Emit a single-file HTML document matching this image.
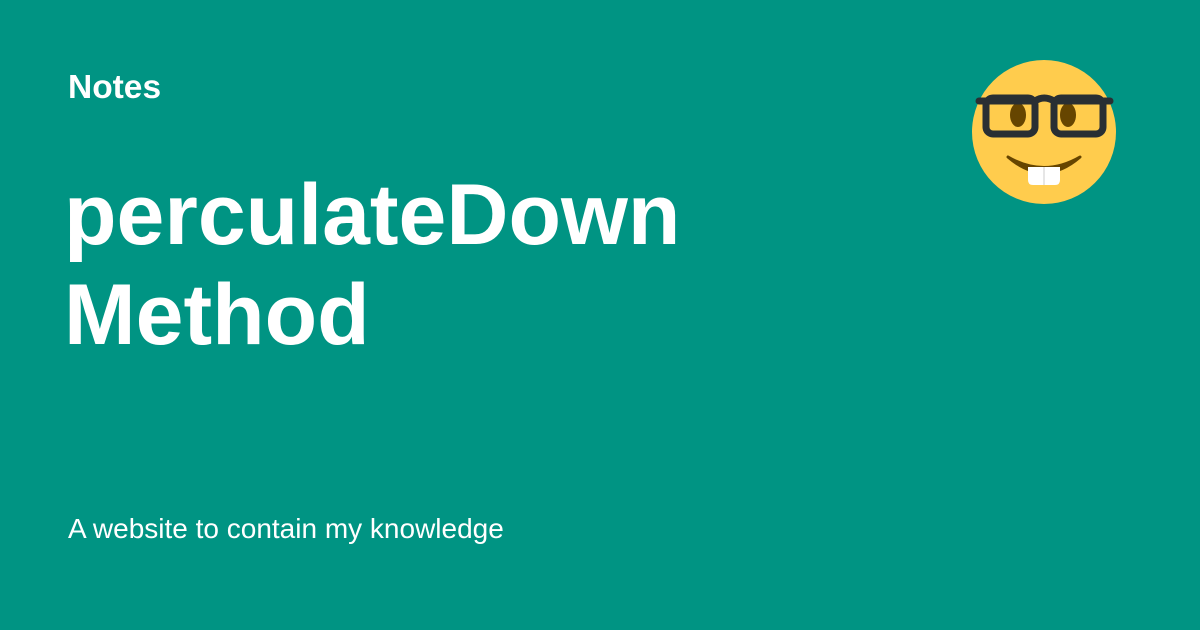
<!DOCTYPE html>
<html><head><style>
html,body{margin:0;padding:0}
body{width:1200px;height:630px;background:#009483;position:relative;overflow:hidden;font-family:"Liberation Sans",sans-serif;color:#fff}
.t{position:absolute;left:68px;white-space:nowrap}
</style></head><body>
<div class="t" style="top:70px;font-size:33.5px;font-weight:bold;line-height:36px">Notes</div>
<div class="t" style="top:165px;font-size:86px;font-weight:bold;line-height:100px;left:64px">perculateDown<br>Method</div>
<div class="t" style="top:511px;font-size:28px;line-height:36px">A website to contain my knowledge</div>
<svg style="position:absolute;left:0;top:0" width="1200" height="630">
<circle cx="1044" cy="132" r="72" fill="#FFCC4D"/>
<path d="M1008 157 Q1044 188 1080 157 Q1044 178 1008 157Z" fill="#664500" stroke="#664500" stroke-width="3" stroke-linejoin="round"/>
<path d="M1028 167 L1060 167 L1060 180 Q1060 185 1055 185 L1033 185 Q1028 185 1028 180Z" fill="#fff"/>
<line x1="1044" y1="167" x2="1044" y2="185" stroke="#ccc" stroke-width="1"/>
<ellipse cx="1018" cy="115" rx="8" ry="12" fill="#664500"/>
<ellipse cx="1068" cy="115" rx="8" ry="12" fill="#664500"/>
<g fill="none" stroke="#292F33" stroke-width="7">
<rect x="986" y="98" width="49" height="36" rx="7"/>
<rect x="1054" y="98" width="49" height="36" rx="7"/>
<path d="M979 101 L1035 101 Q1044 95 1054 101 L1110 101" stroke-linecap="round"/>
</g>
</svg>
</body></html>
